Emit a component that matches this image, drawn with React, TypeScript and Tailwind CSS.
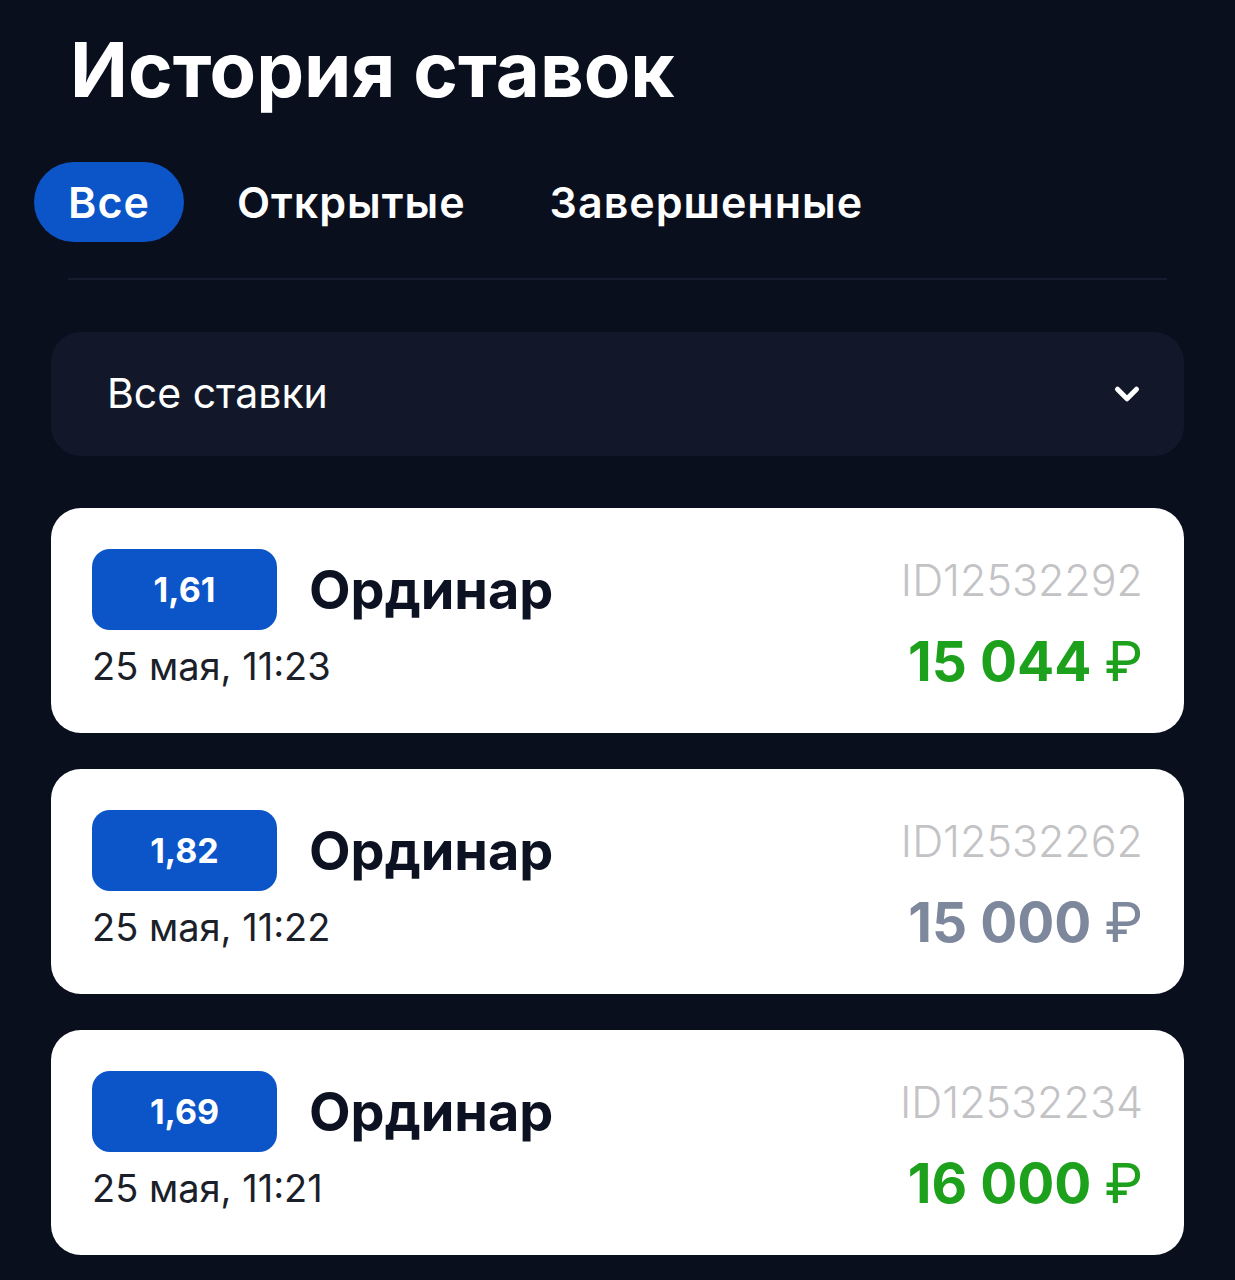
import { ChevronDown } from 'lucide-react';

type Bet = {
  odds: string;
  date: string;
  id: string;
  amount: string;
  won: boolean;
};

const bets: Bet[] = [
  { odds: '1,61', date: '25 мая, 11:23', id: 'ID12532292', amount: '15 044', won: true },
  { odds: '1,82', date: '25 мая, 11:22', id: 'ID12532262', amount: '15 000', won: false },
  { odds: '1,69', date: '25 мая, 11:21', id: 'ID12532234', amount: '16 000', won: true },
];

function BetCard({ bet }: { bet: Bet }) {
  return (
    <div className="flex h-[225px] items-start justify-between rounded-[30px] bg-white px-[41px] pt-[41px]">
      <div className="flex flex-col">
        <div className="flex items-center gap-[32px]">
          <div className="flex h-[81px] w-[185px] items-center justify-center rounded-[18px] bg-[#0b55c9] text-[34px] font-bold text-white">
            {bet.odds}
          </div>
          <span className="text-[54px] font-bold leading-none text-[#0c1222]">Ординар</span>
        </div>
        <span className="mt-[17px] text-[38px] leading-none text-[#1b1f2a]">{bet.date}</span>
      </div>
      <div className="flex flex-col items-end pt-[10px]">
        <span className="text-[43px] font-light leading-none text-[#c3c3c6]">{bet.id}</span>
        <span
          className={`mt-[32px] text-[55px] font-bold leading-none ${bet.won ? 'text-[#1da11d]' : 'text-[#7e889d]'}`}
        >
          {bet.amount} <span className="font-normal">₽</span>
        </span>
      </div>
    </div>
  );
}

export default function App() {
  return (
    <div
      className="min-h-[1280px] w-full bg-[#0a0f1e] px-[51px] pt-[31px]"
      style={{ fontFamily: 'Inter, "Noto Sans", sans-serif' }}
    >
      <h1 className="ml-[19px] text-[76px] font-bold leading-none text-white">История ставок</h1>

      <div className="-ml-[17px] mt-[55px] flex items-center">
        <button className="flex h-[80px] w-[150px] items-center justify-center rounded-full bg-[#0b55c9] text-[43px] font-semibold tracking-[1px] text-white">
          Все
        </button>
        <button className="ml-[53px] text-[43px] font-semibold tracking-[1px] text-white">Открытые</button>
        <button className="ml-[84px] text-[43px] font-semibold tracking-[1px] text-white">Завершенные</button>
      </div>

      <div className="mx-[17px] mt-[36px] h-[2px] bg-[#161b2d]" />

      <div className="mt-[52px] flex h-[124px] items-center justify-between rounded-[30px] bg-[#121829] pl-[56px] pr-[38px]">
        <span className="text-[41px] text-white">Все ставки</span>
        <ChevronDown className="h-[38px] w-[38px] text-white" strokeWidth={3.2} />
      </div>

      <div className="mt-[52px] flex flex-col gap-[36px]">
        {bets.map((bet) => (
          <BetCard key={bet.id} bet={bet} />
        ))}
      </div>
    </div>
  );
}
